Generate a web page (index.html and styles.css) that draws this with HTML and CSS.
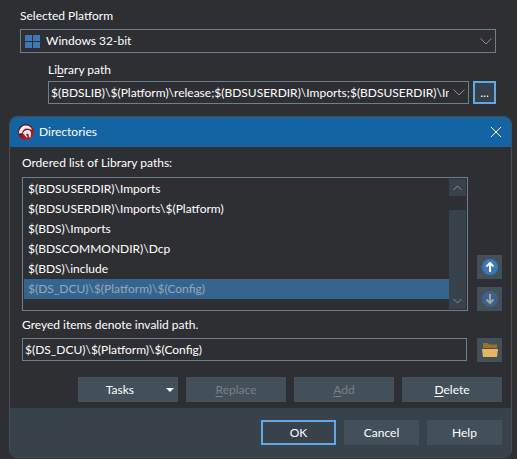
FILE: index.html
```html
<!DOCTYPE html>
<html lang="en">
<head>
<meta charset="utf-8">
<title>Library options</title>
<link rel="stylesheet" href="styles.css">
</head>
<body>
<main class="options">
  <label class="label" for="platform">Selected Platform</label>
  <div class="combo platform">
    <svg class="windows" viewBox="0 0 15 13" width="15" height="13" aria-hidden="true"><path fill="#3e79b4" d="M0 0h7v6H0zM8 0h7v6H8zM0 7h7v6H0zM8 7h7v6H8z"/></svg>
    <select id="platform"><option>Windows 32-bit</option></select>
    <svg class="chevron" viewBox="0 0 12 7" width="12" height="7" aria-hidden="true"><path d="M.5.5 6 6 11.5.5"/></svg>
  </div>
  <div class="library">
    <label class="label" for="library">Li<u>b</u>rary path</label>
    <div class="row">
      <div class="combo path">
        <input id="library" type="text" value="$(BDSLIB)\$(Platform)\release;$(BDSUSERDIR)\Imports;$(BDSUSERDIR)\Imports\$(Platform)">
        <svg class="chevron" viewBox="0 0 12 7" width="12" height="7" aria-hidden="true"><path d="M.5.5 6 6 11.5.5"/></svg>
      </div>
      <button class="browse focused" type="button" aria-label="Edit library path">...</button>
    </div>
  </div>
</main>

<section class="dialog" role="dialog" aria-labelledby="title">
  <header class="titlebar">
    <svg viewBox="0 0 16 16" width="16" height="16" aria-hidden="true">
      <defs><linearGradient id="red" x1="0" y1="0" x2=".8" y2="1"><stop offset="0" stop-color="#4c1220"/><stop offset="1" stop-color="#c0202a"/></linearGradient></defs>
      <circle cx="8" cy="8" r="8" fill="url(#red)"/>
      <path fill="#f6f0f0" d="M1 9.500C1 5 4 1.500 8 1.500c3 0 5 1.500 6 4.500l-2-1C8 3.500 5 5 4 9z"/>
      <path fill="#f0e8e8" d="M5 9.500C5.500 7 8 5.500 10.500 6c2 .5 2.500 2 2.500 4l-.5 3.500-1.500-.5-.5-3-1.500-.5-1 1 2 3-2-.5-2-2.500z"/>
    </svg>
    <h1 id="title">Directories</h1>
    <button class="close" type="button" aria-label="Close"><svg viewBox="0 0 10 10" width="10" height="10" aria-hidden="true"><path d="M0 0 10 10M10 0 0 10"/></svg></button>
  </header>

  <div class="content">
    <p class="label" id="paths-label">Ordered list of Library paths:</p>
    <div class="row">
      <div class="listbox">
        <ul role="listbox" aria-labelledby="paths-label">
          <li role="option">$(BDSUSERDIR)\Imports</li>
          <li role="option">$(BDSUSERDIR)\Imports\$(Platform)</li>
          <li role="option">$(BDS)\Imports</li>
          <li role="option">$(BDSCOMMONDIR)\Dcp</li>
          <li role="option">$(BDS)\include</li>
          <li role="option" class="selected" aria-selected="true">$(DS_DCU)\$(Platform)\$(Config)</li>
        </ul>
        <div class="scrollbar">
          <button type="button" aria-label="Scroll up"><svg viewBox="0 0 9 6" width="9" height="6" aria-hidden="true"><path d="M.5 5 4.500 1 8.500 5"/></svg></button>
          <div class="thumb"></div>
          <button type="button" aria-label="Scroll down"><svg viewBox="0 0 9 6" width="9" height="6" aria-hidden="true"><path d="M.5 1 4.500 5 8.500 1"/></svg></button>
        </div>
      </div>
      <div class="order">
        <button class="tool" type="button" aria-label="Move up"><svg viewBox="0 0 16 16" width="16" height="16" aria-hidden="true"><circle cx="8" cy="8" r="8" fill="#3b78b6"/><path fill="none" stroke="#fff" stroke-width="2" d="M8 13V4M4.500 7.500 8 4l3.500 3.500"/></svg></button>
        <button class="tool" type="button" aria-label="Move down" disabled><svg viewBox="0 0 16 16" width="16" height="16" aria-hidden="true"><circle cx="8" cy="8" r="8" fill="#3c6289"/><path fill="none" stroke="#9da5ad" stroke-width="2" d="M8 3v9M4.500 8.500 8 12l3.500-3.500"/></svg></button>
      </div>
    </div>
    <label class="label hint" for="entry">Greyed items denote invalid path.</label>
    <div class="row">
      <input id="entry" class="entry" type="text" value="$(DS_DCU)\$(Platform)\$(Config)">
      <button class="tool" type="button" aria-label="Browse folders"><svg viewBox="0 0 16 14" width="16" height="14" aria-hidden="true"><path fill="#94732b" d="M1 0h5l1.500 1.500H15V5H1z"/><path fill="#e6b462" d="M0 6h16l-1 8H1z"/></svg></button>
    </div>
    <div class="actions">
      <button class="button tasks" type="button">Tasks<svg viewBox="0 0 8 4" width="8" height="4" aria-hidden="true"><path fill="#fff" d="M0 0h8L4 4z"/></svg></button>
      <button class="button" type="button" disabled><u>R</u>eplace</button>
      <button class="button" type="button" disabled><u>A</u>dd</button>
      <button class="button" type="button"><u>D</u>elete</button>
    </div>
  </div>

  <footer class="footer">
    <button class="button focused" type="button">OK</button>
    <button class="button" type="button">Cancel</button>
    <button class="button" type="button">Help</button>
  </footer>
</section>
</body>
</html>
```
FILE: styles.css
```css
* { box-sizing: border-box; }

body {
  margin: 0;
  background: #2e2f33;
  color: #fff;
  font: 12px/16px Lato, "Open Sans", sans-serif;
}

button, input, select { font: inherit; color: inherit; }
button { padding: 0; border: 0; }
svg { display: block; }
h1, p, ul { margin: 0; padding: 0; font: inherit; }
ul { list-style: none; }
u { text-underline-offset: 2px; }

.options { padding: 8px 21px 0 20px; }
.label { display: block; }
.row { display: flex; }

.combo {
  display: flex;
  align-items: center;
  border: 1px solid #6c7f8d;
  padding: 0 3px 0 4px;
}
.combo select, .combo input {
  flex: 1;
  min-width: 0;
  height: 100%;
  padding: 0;
  border: 0;
  outline: 0;
  background: transparent;
  appearance: none;
}
.platform { height: 24px; margin-top: 5px; gap: 6px; }
.chevron { fill: none; stroke: #8b8d90; }

.library { padding: 9px 0 0 28px; }
.library .row { gap: 4px; margin-top: 3px; }
.path { flex: 1; min-width: 0; height: 23px; padding-left: 2px; gap: 4px; }
.browse { width: 23px; height: 23px; }
.focused { border: 2px solid #62a8e5; background: #35414a; }

.dialog {
  margin: 12px 5px 1px 9px;
  border: 1px solid #4b4d50;
  border-radius: 8px;
  overflow: hidden;
}
.titlebar {
  display: flex;
  align-items: center;
  gap: 5px;
  height: 30px;
  padding: 0 10px 0 8px;
  background: #1463a3;
}
.titlebar h1 { flex: 1; }
.close { background: transparent; }
.close path { stroke: #fff; }

.content { padding: 8px 9px 6px 12px; }
.listbox {
  flex: 1;
  display: flex;
  height: 134px;
  margin-top: 6px;
  padding: 1px;
  border: 1px solid #6c7f8d;
}
.listbox ul { flex: 1; }
.listbox li { padding: 2px 4px; }
.listbox .selected { background: #35658f; color: #94a8ba; }
.scrollbar { display: flex; flex-direction: column; width: 17px; }
.scrollbar button {
  display: grid;
  place-items: center;
  height: 17px;
  background: #37424b;
}
.scrollbar path { fill: none; stroke: #899198; stroke-width: 1; }
.thumb { flex: 1; margin-top: 14px; background: #37424b; }

.order {
  display: flex;
  flex-direction: column;
  justify-content: flex-end;
  gap: 8px;
  margin-left: 9px;
}
.tool {
  display: grid;
  place-items: center;
  width: 25px;
  height: 24px;
  background: #43505a;
}
.hint { margin: 6px 0 5px; }
.entry {
  flex: 1;
  min-width: 0;
  height: 23px;
  margin-right: 10px;
  padding: 0 2px;
  border: 1px solid #6c7f8d;
  outline: 0;
  background: transparent;
}

.actions { display: flex; justify-content: flex-end; gap: 8px; margin-top: 15px; }
.button { width: 75px; height: 25px; background: #43505a; }
.button.focused { background: #37424b; }
.actions .button { width: 100px; }
.button:disabled { color: #7d7f82; }
.tasks { display: flex; align-items: center; justify-content: flex-end; gap: 32px; padding-right: 4px; }

.footer {
  display: flex;
  justify-content: flex-end;
  gap: 8px;
  padding: 12px 9px;
  background: #37424b;
}
```
